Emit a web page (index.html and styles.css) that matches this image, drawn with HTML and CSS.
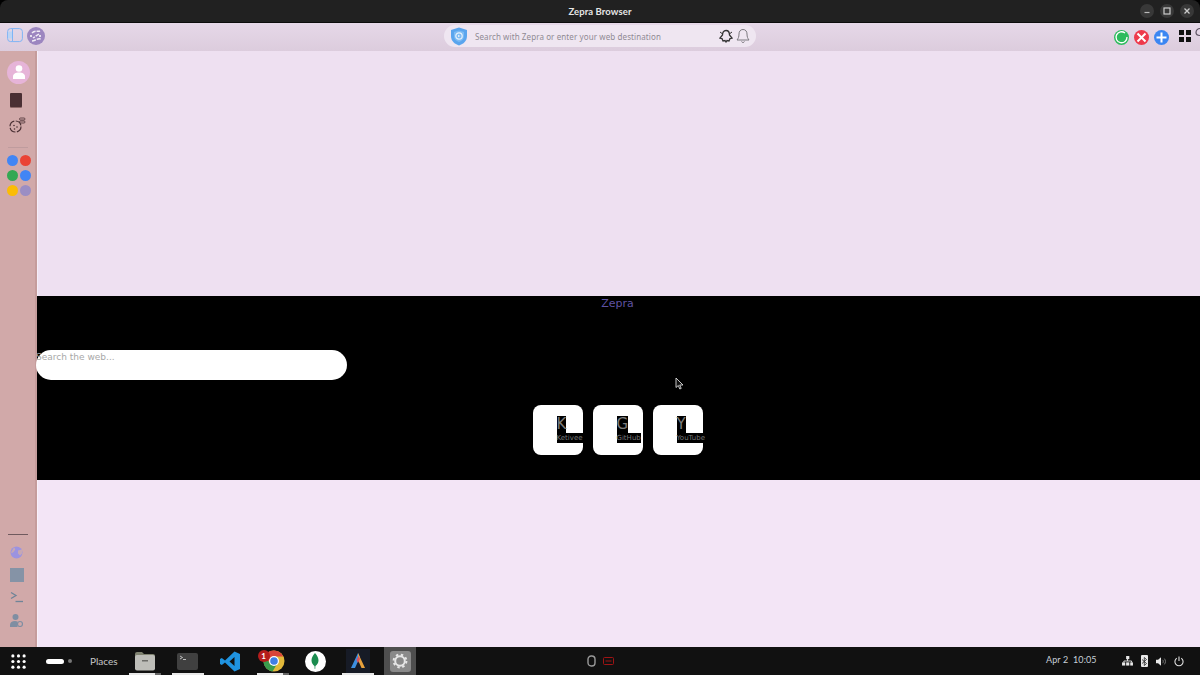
FILE: index.html
```html
<!DOCTYPE html>
<html lang="en">
<head>
    <meta charset="UTF-8">
    <title>Zepra Browser</title>
    <link rel="stylesheet" href="styles.css">
</head>
<body>

<div class="titlebar">
    <div class="title">Zepra Browser</div>
    <div class="win-buttons">
        <span class="win-btn"><svg width="10" height="10" viewBox="0 0 10 10"><path d="M2.500 6.500h5" stroke="#bbb" stroke-width="1.200"/></svg></span>
        <span class="win-btn"><svg width="10" height="10" viewBox="0 0 10 10"><rect x="2" y="2" width="6" height="6" fill="none" stroke="#ccc" stroke-width="1.200"/></svg></span>
        <span class="win-btn"><svg width="10" height="10" viewBox="0 0 10 10"><path d="M2.500 2.500l5 5M7.500 2.500l-5 5" stroke="#ccc" stroke-width="1.300"/></svg></span>
    </div>
</div>

<div class="toolbar">
    <div class="toolbar-left">
        <svg width="16" height="15" viewBox="0 0 16 15"><rect x="0.6" y="0.6" width="14.8" height="13" rx="3" fill="none" stroke="#7fb4f5" stroke-width="1"/><path d="M5.5 1v12" stroke="#7fb4f5"/><path d="M1 3.5h4v7H1z" fill="#bcd4f4"/></svg>
        <svg width="18" height="18" viewBox="0 0 18 18"><circle cx="9" cy="9" r="9" fill="#9c86c0"/><path d="M5 6c3-3 6-1 8-2M12 7L6 11M5 14c3 0 5-3 9-2" stroke="#f1ecf6" stroke-width="1.5" fill="none" stroke-dasharray="4 1"/><circle cx="13" cy="9" r="1" fill="#fff"/><circle cx="4" cy="9" r="1" fill="#fff"/></svg>
    </div>
    <div class="urlbar">
        <svg class="shield" width="18" height="19" viewBox="0 0 18 19"><path d="M9 0.5l8 2.500v6c0 5-3.500 8-8 9.500-4.500-1.500-8-4.500-8-9.500v-6z" fill="#5aa5ee"/><path d="M9 3.500l5 1.500v4c0 3-2 5-5 6-3-1-5-3-5-6V5z" fill="#7dbbf3"/><circle cx="9" cy="9" r="3.200" fill="none" stroke="#e6f1fc" stroke-width="1.200"/><path d="M8 7.800l2.300 1.200L8 10.200z" fill="#e6f1fc"/></svg>
        <span class="url-text">Search with Zepra or enter your web destination</span>
        <svg width="14" height="14" viewBox="0 0 14 14"><path d="M7 1.500c2.500 0 3.500 2 3.500 4.500l2.500 3-2 .5-1 2.500-2-.5-1 1.500-1-1.500-2 .5-1-2.500-2-.5 2.500-3c0-2.500 1-4.500 3.500-4.500z" fill="none" stroke="#333" stroke-width="1.300"/><path d="M1 3l2 1.500M13 3l-2 1.500" stroke="#333"/></svg>
        <svg width="14" height="16" viewBox="0 0 14 16"><path d="M7 1.500c2.700 0 4 2 4 4.500 0 3 .800 4.500 2 6H1c1.200-1.500 2-3 2-6 0-2.500 1.300-4.500 4-4.500zM5.500 13.500c.500 1.300 2.500 1.300 3 0" fill="none" stroke="#7d7a80" stroke-width="1"/></svg>
    </div>
    <div class="toolbar-right">
        <span class="round-btn green"><svg width="15" height="15" viewBox="0 0 15 15"><path d="M11 3a5.500 5.500 0 1 0 2 4" fill="none" stroke="#fff" stroke-width="1.300"/></svg></span>
        <span class="round-btn red"><svg width="15" height="15" viewBox="0 0 15 15"><path d="M3.500 3.500l8 8M11.500 3.500l-8 8" stroke="#fff" stroke-width="2"/></svg></span>
        <span class="round-btn blue"><svg width="15" height="15" viewBox="0 0 15 15"><path d="M7.500 2.500v10M2.500 7.500h10" stroke="#fff" stroke-width="2"/></svg></span>
        <span class="apps-grid"><i></i><i></i><i></i><i></i></span>
        <svg class="cut-icon" width="5" height="14" viewBox="0 0 5 14"><path d="M5 1.500a4 4 0 0 0-4 4c0 2 2 3 4 3" fill="none" stroke="#5b5060" stroke-width="1.200"/></svg>
    </div>
</div>

<div class="main">
    <aside class="sidebar">
        <div class="side-top">
            <span class="avatar"><svg width="16" height="17" viewBox="0 0 16 17"><circle cx="8" cy="4.500" r="3.300" fill="#fff"/><path d="M2 15v-2.500C2 10 4.500 8.500 8 8.500s6 1.500 6 4V15z" fill="#fff"/></svg></span>
            <span class="book"></span>
            <svg class="cookie" width="17" height="16" viewBox="0 0 17 16"><circle cx="6.500" cy="9.500" r="5.500" fill="none" stroke="#4a3034" stroke-width="1.200" stroke-dasharray="7 1.500"/><circle cx="5" cy="8.500" r=".8" fill="#4a3034"/><circle cx="8" cy="10" r=".8" fill="#4a3034"/><circle cx="5.500" cy="12" r=".8" fill="#4a3034"/><rect x="10.500" y="1" width="5.500" height="2" rx="1" fill="none" stroke="#4a3034" stroke-width=".8"/><rect x="10.500" y="4" width="5.500" height="2" rx="1" fill="none" stroke="#4a3034" stroke-width=".8"/></svg>
            <span class="side-rule"></span>
            <div class="dots">
                <i class="dot c-blue"></i><i class="dot c-red"></i>
                <i class="dot c-green"></i><i class="dot c-blue"></i>
                <i class="dot c-yellow"></i><i class="dot c-purple"></i>
            </div>
        </div>
        <div class="side-bottom">
            <span class="side-rule dark"></span>
            <svg width="13" height="13" viewBox="0 0 13 13"><circle cx="6.500" cy="6.500" r="6" fill="#9c93e0"/><path d="M4 1.500c2 1 1 3 0 4S2 7.500 1 6.500M8 4.500l4-1v4l-2 2-2-2z" fill="#c6a8b4"/></svg>
            <span class="square"></span>
            <svg class="term" width="13" height="12" viewBox="0 0 13 12"><path d="M1 1.500l5 3-5 3" fill="none" stroke="#6f8498" stroke-width="1.300"/><path d="M5.500 10.500H13" stroke="#6f8498" stroke-width="1.300"/></svg>
            <svg width="13" height="13" viewBox="0 0 13 13"><circle cx="5.500" cy="3" r="3" fill="#7f8ea2"/><path d="M0 13v-2c0-2.500 2-4 5-4 1 0 2 .2 2.500.5V13z" fill="#7f8ea2"/><circle cx="10" cy="10" r="2.500" fill="none" stroke="#7f8ea2" stroke-width="1.200"/></svg>
        </div>
    </aside>

    <main class="content">
        <div class="pane-top"></div>
        <section class="zepra-page">
            <h1 class="brand">Zepra</h1>
            <div class="search-box">Search the web...</div>
            <div class="shortcuts">
                <a class="tile"><span class="tile-letter">K</span><span class="tile-name">Ketivee</span></a>
                <a class="tile"><span class="tile-letter">G</span><span class="tile-name">GitHub</span></a>
                <a class="tile"><span class="tile-letter">Y</span><span class="tile-name">YouTube</span></a>
            </div>
            <svg class="cursor" width="9" height="13" viewBox="0 0 9 13"><path d="M1 1v9.500l2.300-2 1.500 3.500 1.400-.6-1.500-3.400H8z" fill="#111" stroke="#ddd" stroke-width=".9"/></svg>
        </section>
        <div class="pane-bottom"></div>
    </main>
</div>

<footer class="taskbar">
    <svg class="launcher" width="15" height="15" viewBox="0 0 16 16" fill="#fff"><circle cx="2" cy="2" r="1.700"/><circle cx="8" cy="2" r="1.700"/><circle cx="14" cy="2" r="1.700"/><circle cx="2" cy="8" r="1.700"/><circle cx="8" cy="8" r="1.700"/><circle cx="14" cy="8" r="1.700"/><circle cx="2" cy="14" r="1.700"/><circle cx="8" cy="14" r="1.700"/><circle cx="14" cy="14" r="1.700"/></svg>
    <span class="workspace"><i class="ws-pill"></i><i class="ws-dot"></i></span>
    <span class="places">Places</span>

    <div class="task-icons">
        <span class="task running more"><svg width="22" height="20" viewBox="0 0 22 20"><path d="M1 3a2 2 0 0 1 2-2h5l2 2h9a2 2 0 0 1 2 2v1H1z" fill="#7f8270"/><rect x="1" y="4" width="20" height="15.500" rx="2" fill="#bdbdb8"/><rect x="8" y="9" width="6" height="1.500" fill="#6c6c68"/></svg></span>
        <span class="task running"><svg width="21" height="17" viewBox="0 0 21 17"><rect width="21" height="17" rx="2" fill="#404040"/><path d="M3 3l2.500 1.500L3 6" fill="none" stroke="#ddd" stroke-width=".8"/><path d="M6 6.500h3" stroke="#ddd" stroke-width=".8"/></svg></span>
        <span class="task"><svg width="20" height="21" viewBox="0 0 20 21"><path d="M14.500 0.500L20 3v15l-5.500 2.500L5 11.500 1.800 14 0 13V8l1.800-1L5 9.500zM14.500 6l-5 4.500 5 4.500z" fill="#1f93e0"/></svg></span>
        <span class="task running more chrome-wrap">
            <svg width="22" height="22" viewBox="0 0 22 22"><circle cx="11" cy="11" r="10.500" fill="#e2b93a"/><path d="M11 .5a10.500 10.500 0 0 0-9 5L6.500 13 11 6.500h9.200A10.500 10.500 0 0 0 11 .5z" fill="#d9453a"/><path d="M2 5.500a10.500 10.500 0 0 0 7.500 16L14 14H7z" fill="#3b9c4d"/><circle cx="11" cy="11" r="5" fill="#fff"/><circle cx="11" cy="11" r="3.800" fill="#3f7fe6"/></svg>
            <b class="badge">1</b>
        </span>
        <span class="task"><span class="mongo"><svg width="8" height="16" viewBox="0 0 8 16"><path d="M4 0c2.500 3 3.500 5 3.500 7.500S6 12 4.400 13L4.200 16h-.5L3.500 13C2 12 .5 10 .5 7.500S1.500 3 4 0z" fill="#1b8c4f"/></svg></span></span>
        <span class="task running"><span class="arch-tile"><svg width="18" height="18" viewBox="0 0 18 18"><path d="M9 1l2 4-5 11H2z" fill="#3d8fe0"/><path d="M9 1l7 15h-3.500L9 8z" fill="#e8a13c"/><path d="M7.500 8l2-4 1.500 3-2 4z" fill="#d9505e"/></svg></span></span>
        <span class="task active"><span class="gear-tile"><svg width="16" height="16" viewBox="0 0 20 20"><circle cx="10" cy="10" r="6" fill="none" stroke="#e6e6e6" stroke-width="2.500"/><circle cx="10" cy="10" r="8" fill="none" stroke="#e6e6e6" stroke-width="2.500" stroke-dasharray="3 3.300"/></svg></span></span>
    </div>

    <div class="indicators">
        <svg width="9" height="12" viewBox="0 0 9 12"><rect x="1" y="1" width="7" height="10" rx="3.200" fill="none" stroke="#9a9a9a" stroke-width="1.400"/></svg>
        <svg width="11" height="8" viewBox="0 0 11 8"><rect x=".5" y=".5" width="10" height="7" rx="1" fill="none" stroke="#a01414"/><path d="M2.500 4h6" stroke="#a01414"/></svg>
    </div>

    <div class="clock">Apr 2&nbsp; 10:05</div>

    <div class="tray">
        <svg width="11" height="10" viewBox="0 0 12 11" fill="#e8e8e8"><rect x="4.500" y="0" width="3.500" height="3.500"/><rect x="0" y="7" width="3.500" height="3.500"/><rect x="4.500" y="7" width="3.500" height="3.500"/><rect x="9" y="7" width="3" height="3.500"/><path d="M6 3v2.500M2 7V5.500h8.500V7" fill="none" stroke="#e8e8e8"/></svg>
        <span class="bt"><svg width="5" height="9" viewBox="0 0 5 9"><path d="M0 2.500l4.500 4L2.300 8.500V.5L4.500 2.500 0 6.500" fill="none" stroke="#222" stroke-width=".8"/></svg></span>
        <svg width="10" height="9" viewBox="0 0 12 10"><path d="M0 3h2.500L6 0v10L2.500 7H0z" fill="#e8e8e8"/><path d="M8 3c1 1 1 3 0 4M10 1.500c1.800 2 1.800 5 0 7" fill="none" stroke="#8a8a8a"/></svg>
        <svg width="10" height="11" viewBox="0 0 11 12"><path d="M3 2.500a4.500 4.500 0 1 0 5 0M5.500 0.500v5" fill="none" stroke="#e0e0e0" stroke-width="1.200"/></svg>
    </div>
</footer>

</body>
</html>
```

FILE: styles.css
```css
* {
    box-sizing: border-box;
}
body {
    margin: 0;
    width: 1200px;
    height: 675px;
    overflow: hidden;
    display: flex;
    flex-direction: column;
    font-family: "Noto Sans", sans-serif;
    background-color: #000;
}
svg {
    display: block;
    flex: none;
}

/* window title */
.titlebar {
    height: 23px;
    background-color: #212121;
    border-bottom: 1px solid #0c0c0c;
    border-radius: 8px 8px 0 0;
    display: flex;
    align-items: center;
    justify-content: center;
    position: relative;
}
.title {
    font-family: Lato, sans-serif;
    font-size: 9.500px;
    font-weight: 700;
    letter-spacing: 0.1px;
    color: #e6e6e6;
}
.win-buttons {
    position: absolute;
    right: 6px;
    top: 4px;
    display: flex;
    gap: 6px;
}
.win-btn {
    width: 14px;
    height: 14px;
    border-radius: 50%;
    background-color: #383838;
    display: flex;
    align-items: center;
    justify-content: center;
}

/* browser toolbar */
.toolbar {
    height: 28px;
    background: linear-gradient(#e6d8e8, #dcccdd);
    display: flex;
    align-items: center;
    position: relative;
    padding-left: 7px;
}
.toolbar-left {
    display: flex;
    align-items: center;
    gap: 4px;
    margin-top: -3px;
}
.urlbar {
    position: absolute;
    left: 444px;
    top: 2px;
    width: 312px;
    height: 22px;
    border-radius: 11px;
    background-color: #efe6f1;
    display: flex;
    align-items: center;
    padding: 0 6px;
    font-size: 8px;
    color: #8f8a93;
    letter-spacing: 0.1px;
}
.shield {
    margin-right: 7px;
}
.url-text {
    flex: 1;
}
.urlbar svg + svg {
    margin-left: 3px;
}
.toolbar-right {
    margin-left: auto;
    display: flex;
    align-items: center;
    gap: 5px;
}
.round-btn {
    width: 15px;
    height: 15px;
    border-radius: 50%;
    display: block;
}
.round-btn.green { background-color: #2dbb5d; }
.round-btn.red { background-color: #ee3a4c; }
.round-btn.blue { background-color: #3b86f2; }
.apps-grid {
    width: 12px;
    height: 12px;
    margin: -2px 0 0 5px;
    display: grid;
    grid-template-columns: 5px 5px;
    gap: 2px;
}
.apps-grid i {
    background-color: #111;
}
.cut-icon {
    margin: -7px 0 0 -1px;
}

/* sidebar + page */
.main {
    flex: 1;
    display: flex;
    min-height: 0;
}
.sidebar {
    width: 37px;
    flex: none;
    background-color: #d1a9a9;
    border-right: 2px solid #c59c9c;
    display: flex;
    flex-direction: column;
    justify-content: space-between;
    padding: 10px 0 20px;
}
.side-top,
.side-bottom {
    display: flex;
    flex-direction: column;
    align-items: center;
}
.side-bottom {
    gap: 9px;
}
.side-bottom svg,
.side-bottom .square {
    margin-right: 2px;
}
.avatar {
    width: 23px;
    height: 23px;
    margin-left: 2px;
    border-radius: 50%;
    background-color: #e6b4d8;
    display: flex;
    align-items: center;
    justify-content: center;
}
.book {
    width: 12px;
    height: 14px;
    margin: 9px 3px 0 0;
    background-color: #4a2f33;
    border-radius: 1px;
    box-shadow: 0 1px 0 #8d6868;
}
.cookie {
    margin-top: 10px;
    margin-right: 1px;
}
.side-rule {
    width: 20px;
    height: 1px;
    background-color: #bf9c9e;
    margin: 14px 0 7px;
}
.side-rule.dark {
    background-color: #6f5a5e;
    margin: 0 0 2px;
}
.term {
    margin-bottom: 2px;
}
.dots {
    margin-left: 3px;
    display: grid;
    grid-template-columns: 11px 11px;
    column-gap: 2px;
    row-gap: 4px;
}
.dot {
    width: 11px;
    height: 11px;
    border-radius: 50%;
}
.c-blue { background-color: #4285f4; }
.c-red { background-color: #ea4335; }
.c-green { background-color: #34a853; }
.c-yellow { background-color: #fbbc05; }
.c-purple { background-color: #9b8ec4; }
.square {
    width: 14px;
    height: 14px;
    background-color: #8593a6;
}

.content {
    flex: 1;
    display: flex;
    flex-direction: column;
    min-width: 0;
}
.pane-top {
    height: 245px;
    background-color: #eee0f1;
    box-shadow: inset 1px 0 0 #f6eef8;
}
.pane-bottom {
    flex: 1;
    background-color: #f3e5f6;
    box-shadow: inset 1px 0 0 #f9f1fa;
}

/* page inside the webview */
.zepra-page {
    height: 184px;
    background-color: #000;
    position: relative;
    font-family: "DejaVu Sans", sans-serif;
}
.brand {
    margin: 0;
    text-align: center;
    font-size: 11px;
    font-weight: normal;
    line-height: 15px;
    padding-right: 2px;
    color: #5f52a3;
}
.search-box {
    width: 311px;
    height: 30px;
    margin: 39px 0 0 -1px;
    background-color: #fff;
    border-radius: 15px;
    font-size: 9px;
    line-height: 13px;
    color: #a8a8a8;
    padding-top: 1px;
}
.shortcuts {
    display: flex;
    justify-content: center;
    gap: 10px;
    margin-top: 25px;
    padding-right: 2px;
}
.tile {
    width: 50px;
    height: 50px;
    background-color: #fff;
    border-radius: 8px;
    display: flex;
    flex-direction: column;
    align-items: flex-start;
    padding: 11px 0 0 24px;
    white-space: nowrap;
}
.tile-letter {
    background-color: #000;
    color: #7c7c7c;
    font-size: 15px;
    line-height: 17px;
}
.tile-name {
    background-color: #000;
    color: #777;
    font-size: 7px;
    line-height: 10px;
}
.cursor {
    position: absolute;
    left: 638px;
    top: 81px;
}

/* desktop panel */
.taskbar {
    height: 28px;
    background-color: #111;
    display: flex;
    align-items: center;
    position: relative;
    color: #c8c8c8;
    font-family: Lato, sans-serif;
    font-size: 10px;
}
.launcher {
    margin-left: 11px;
}
.workspace {
    margin-left: 20px;
    display: flex;
    align-items: center;
    gap: 4px;
}
.ws-pill {
    width: 18px;
    height: 5px;
    border-radius: 3px;
    background-color: #fff;
}
.ws-dot {
    width: 4px;
    height: 4px;
    border-radius: 50%;
    background-color: #777;
}
.places {
    margin-left: 18px;
}
.task-icons {
    position: absolute;
    left: 129px;
    top: 0;
    display: flex;
}
.task {
    width: 32px;
    height: 28px;
    margin-right: 10.500px;
    display: flex;
    align-items: center;
    justify-content: center;
    position: relative;
}
.task.running::after {
    content: "";
    position: absolute;
    left: 0;
    right: 0;
    bottom: 0;
    height: 2px;
    background-color: #e8e8e8;
}
.task.more::after {
    background: linear-gradient(to right, #e8e8e8 26px, #666 26px);
}
.task.active {
    background-color: #4e4e4e;
}
.gear-tile {
    width: 21px;
    height: 21px;
    border-radius: 3px;
    background-color: #8a8a8a;
    display: flex;
    align-items: center;
    justify-content: center;
}
.chrome-wrap svg {
    margin-left: 2px;
}
.badge {
    position: absolute;
    left: 1px;
    top: 3px;
    width: 12px;
    height: 12px;
    border-radius: 50%;
    background-color: #b51c1c;
    color: #fff;
    font-size: 8px;
    line-height: 12px;
    text-align: center;
}
.mongo {
    width: 21px;
    height: 21px;
    border-radius: 50%;
    background-color: #fff;
    display: flex;
    align-items: center;
    justify-content: center;
}
.arch-tile {
    width: 24px;
    height: 24px;
    background-color: #171b26;
    display: flex;
    align-items: center;
    justify-content: center;
}
.indicators {
    position: absolute;
    left: 587px;
    top: 8px;
    display: flex;
    align-items: center;
    gap: 7px;
}
.clock {
    position: absolute;
    left: 1046px;
    top: 7px;
    font-size: 9px;
    letter-spacing: 0.1px;
    color: #c8d0d8;
}
.tray {
    position: absolute;
    left: 1122px;
    top: 8px;
    display: flex;
    align-items: center;
    gap: 8px;
}
.bt {
    width: 7px;
    height: 12px;
    background-color: #e8e8e8;
    border-radius: 1px;
    display: flex;
    align-items: center;
    justify-content: center;
}
```
